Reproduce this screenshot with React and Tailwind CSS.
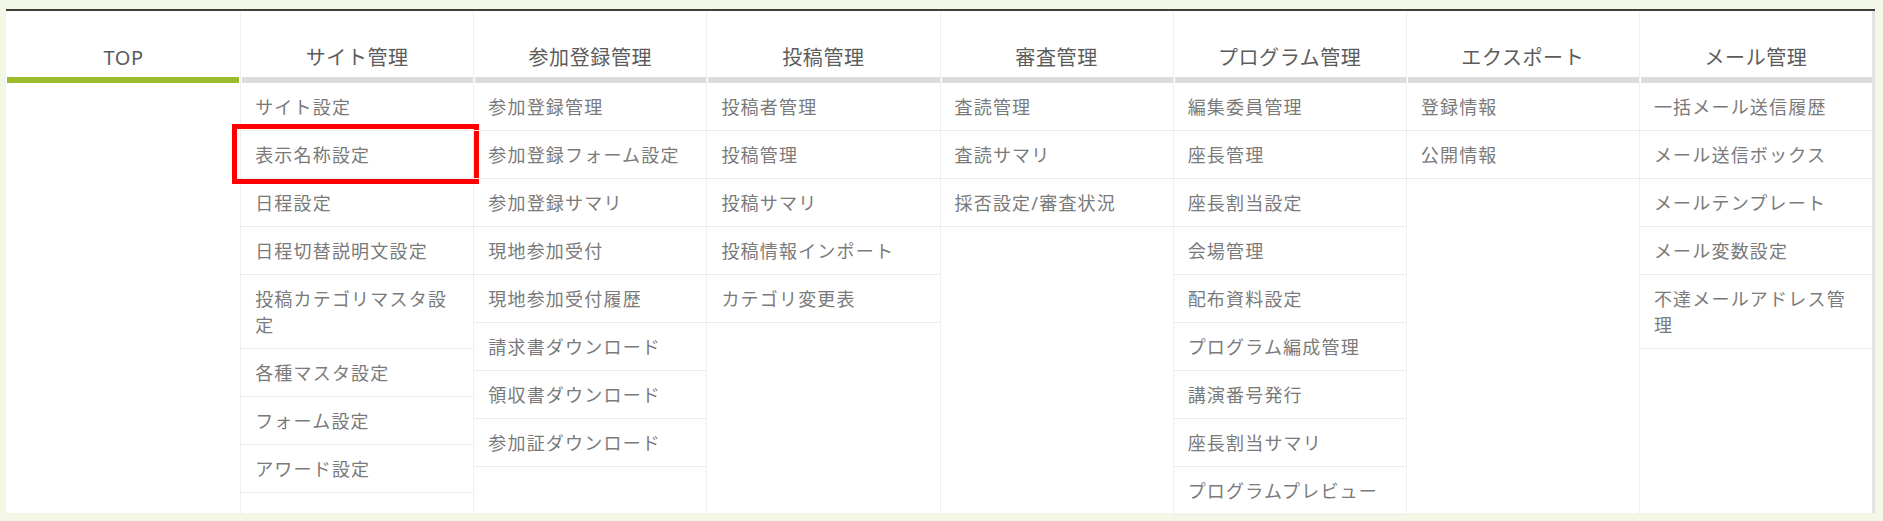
const menus = [
  { title: 'TOP', active: true, items: [] },
  {
    title: 'サイト管理',
    items: ['サイト設定', '表示名称設定', '日程設定', '日程切替説明文設定', '投稿カテゴリマスタ設定', '各種マスタ設定', 'フォーム設定', 'アワード設定'],
  },
  {
    title: '参加登録管理',
    items: ['参加登録管理', '参加登録フォーム設定', '参加登録サマリ', '現地参加受付', '現地参加受付履歴', '請求書ダウンロード', '領収書ダウンロード', '参加証ダウンロード'],
  },
  { title: '投稿管理', items: ['投稿者管理', '投稿管理', '投稿サマリ', '投稿情報インポート', 'カテゴリ変更表'] },
  { title: '審査管理', items: ['査読管理', '査読サマリ', '採否設定/審査状況'] },
  {
    title: 'プログラム管理',
    items: ['編集委員管理', '座長管理', '座長割当設定', '会場管理', '配布資料設定', 'プログラム編成管理', '講演番号発行', '座長割当サマリ', 'プログラムプレビュー'],
  },
  { title: 'エクスポート', items: ['登録情報', '公開情報'] },
  { title: 'メール管理', items: ['一括メール送信履歴', 'メール送信ボックス', 'メールテンプレート', 'メール変数設定', '不達メールアドレス管理'] },
];

export default function App() {
  return (
    <div
      className="h-[521px] w-[1883px] overflow-hidden bg-[#f3f8e6] pl-[6px] pt-[9px]"
      style={{ fontFamily: '"Noto Sans", "Noto Sans CJK JP", sans-serif' }}
    >
      <div className="flex h-[504px] w-[1869px] border-t-2 border-[#3b403a] bg-white">
        <div className="grid h-full flex-1 grid-cols-8 pl-[1px]">
          {menus.map((menu, i) => (
            <div key={menu.title} className={i === 0 ? 'flex flex-col' : 'flex flex-col border-l border-[#efefef]'}>
              <div className="flex h-[66px] items-end justify-center pb-[6px] text-[20px] leading-[26px] tracking-[0.6px] text-[#5c5c5c]">
                {menu.title}
              </div>
              <div className={menu.active ? 'mr-[1px] h-[6px] bg-[#9bbb2c]' : 'ml-[1px] h-[6px] bg-[#dcdcdc]'} />
              <ul>
                {menu.items.map((item) => (
                  <li
                    key={item}
                    className="relative border-b border-[#ececec] px-[14px] pb-[10px] pt-[11px] text-[18px] leading-[26px] tracking-[1.2px] text-[#7a7a7a]"
                  >
                    {item}
                    {item === '表示名称設定' && (
                      <span className="pointer-events-none absolute -bottom-[6px] -left-[9px] -right-[6px] -top-[7px] border-[5px] border-[#ff0000]" />
                    )}
                  </li>
                ))}
              </ul>
            </div>
          ))}
        </div>
        <div className="w-[3px] bg-[#e3e3e3]" />
      </div>
    </div>
  );
}
